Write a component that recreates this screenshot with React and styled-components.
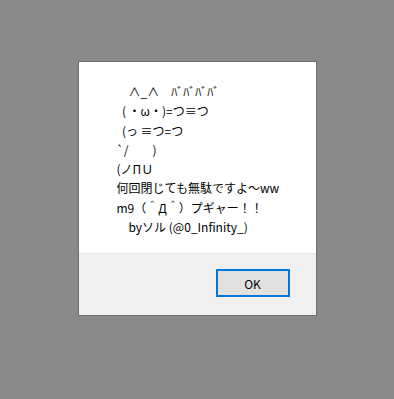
import React from "react";
import styled, { createGlobalStyle } from "styled-components";

const lines = [
  "　∧_∧　ﾊﾞﾊﾞﾊﾞﾊﾞ",
  "  ( ・ω・)=つ≡つ",
  "  (っ ≡つ=つ",
  "`/　　)",
  "(ノΠＵ",
  "何回閉じても無駄ですよ～ww",
  "m9（＾Д＾）プギャー！！",
  "　byソル (@0_Infinity_)",
];

const GlobalStyle = createGlobalStyle`
  html, body {
    margin: 0;
    padding: 0;
    background: #898989;
  }
`;

const Page = styled.div`
  width: 394px;
  height: 399px;
  display: flex;
  justify-content: center;
  align-items: flex-start;
  padding-top: 61px;
  box-sizing: border-box;
  background: #898989;
`;

const Dialog = styled.div`
  width: 239px;
  height: 255px;
  box-sizing: border-box;
  border: 1px solid #6f6f6f;
  background: #f0f0f0;
  display: flex;
  flex-direction: column;
  font-family: "Noto Sans CJK JP", "Noto Sans", sans-serif;
`;

const Body = styled.div`
  height: 191px;
  background: #ffffff;
  padding: 20px 0 0 38px;
  box-sizing: border-box;
`;

const Line = styled.div`
  font-size: 12px;
  line-height: 19.3px;
  color: #000;
  white-space: pre;
`;

const Footer = styled.div`
  flex: 1;
  display: flex;
  justify-content: flex-end;
  align-items: flex-start;
  padding: 15px 26px 0 0;
  border-top: 1px solid #e6e6e6;
`;

const Button = styled.button`
  width: 74px;
  height: 28px;
  box-sizing: border-box;
  border: 2px solid #0078d7;
  background: #e1e1e1;
  font-family: "Noto Sans CJK JP", "Noto Sans", sans-serif;
  font-size: 12px;
  color: #000;
  padding: 0;
`;

export default function App() {
  return (
    <>
      <GlobalStyle />
      <Page>
        <Dialog>
          <Body>
            {lines.map((l, i) => (
              <Line key={i}>{l}</Line>
            ))}
          </Body>
          <Footer>
            <Button>OK</Button>
          </Footer>
        </Dialog>
      </Page>
    </>
  );
}
